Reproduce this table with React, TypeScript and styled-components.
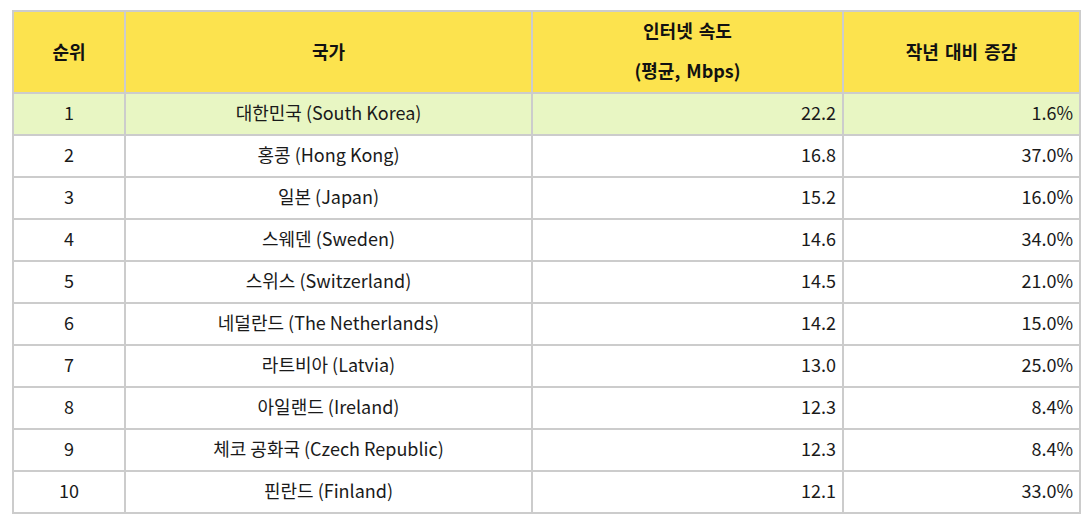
import React from 'react';
import styled, { createGlobalStyle } from 'styled-components';

const GlobalStyle = createGlobalStyle`
  body {
    margin: 0;
    background: #ffffff;
    font-family: "Noto Sans CJK KR", "Noto Sans", sans-serif;
    color: #1a1a1a;
  }
`;

const Page = styled.div`
  padding: 10px 11px 0 12px;
`;

const Table = styled.table`
  width: 1067px;
  border-collapse: collapse;
  table-layout: fixed;
  font-size: 18px;
`;

const HeadCell = styled.th`
  background-color: #fce34e;
  border: 2px solid #cccccc;
  font-weight: 700;
  font-size: 18px;
  word-spacing: 2px;
  line-height: 40px;
  height: 78px;
  padding: 0 0 2px;
  text-align: center;
  vertical-align: middle;
  color: #111;
`;

const HeadLines = styled.div`
  display: flex;
  flex-direction: column;
  align-items: center;
  line-height: 40px;
  margin: -2px 0 0;
`;

const Row = styled.tr<{ highlight?: boolean }>`
  background-color: ${props => (props.highlight ? '#e8f6c3' : '#ffffff')};
`;

const Cell = styled.td<{ align?: 'center' | 'right' }>`
  border: 2px solid #cccccc;
  height: 36px;
  padding: 0 6px 4px 6px;
  text-align: ${props => props.align || 'center'};
  vertical-align: middle;
  line-height: 36px;
  color: #1a1a1a;
`;

interface CountryRow {
  rank: number;
  country: string;
  speed: string;
  change: string;
}

const rows: CountryRow[] = [
  { rank: 1, country: '대한민국 (South Korea)', speed: '22.2', change: '1.6%' },
  { rank: 2, country: '홍콩 (Hong Kong)', speed: '16.8', change: '37.0%' },
  { rank: 3, country: '일본 (Japan)', speed: '15.2', change: '16.0%' },
  { rank: 4, country: '스웨덴 (Sweden)', speed: '14.6', change: '34.0%' },
  { rank: 5, country: '스위스 (Switzerland)', speed: '14.5', change: '21.0%' },
  { rank: 6, country: '네덜란드 (The Netherlands)', speed: '14.2', change: '15.0%' },
  { rank: 7, country: '라트비아 (Latvia)', speed: '13.0', change: '25.0%' },
  { rank: 8, country: '아일랜드 (Ireland)', speed: '12.3', change: '8.4%' },
  { rank: 9, country: '체코 공화국 (Czech Republic)', speed: '12.3', change: '8.4%' },
  { rank: 10, country: '핀란드 (Finland)', speed: '12.1', change: '33.0%' },
];

const App: React.FC = () => {
  return (
    <Page>
      <GlobalStyle />
      <Table>
        <colgroup>
          <col style={{ width: 112 }} />
          <col style={{ width: 407 }} />
          <col style={{ width: 311 }} />
          <col style={{ width: 237 }} />
        </colgroup>
        <thead>
          <tr>
            <HeadCell>순위</HeadCell>
            <HeadCell>국가</HeadCell>
            <HeadCell>
              <HeadLines>
                <span>인터넷 속도</span>
                <span>(평균, Mbps)</span>
              </HeadLines>
            </HeadCell>
            <HeadCell>작년 대비 증감</HeadCell>
          </tr>
        </thead>
        <tbody>
          {rows.map(row => (
            <Row key={row.rank} highlight={row.rank === 1}>
              <Cell>{row.rank}</Cell>
              <Cell>{row.country}</Cell>
              <Cell align="right">{row.speed}</Cell>
              <Cell align="right">{row.change}</Cell>
            </Row>
          ))}
        </tbody>
      </Table>
    </Page>
  );
};

export default App;
